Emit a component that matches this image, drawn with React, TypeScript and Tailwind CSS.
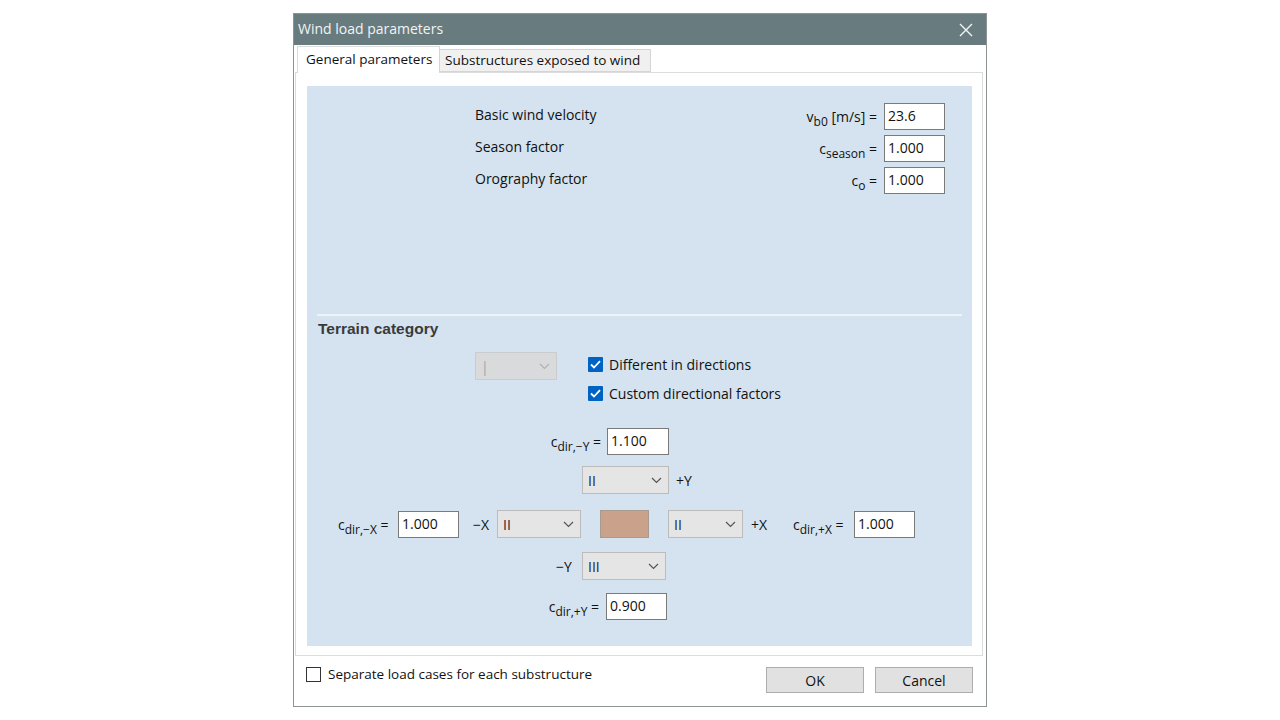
import React from "react";

const font = { fontFamily: '"Open Sans", "Noto Sans", sans-serif' };

function Sub({ base, sub }: { base: string; sub: string }) {
  return (
    <span className="whitespace-nowrap">
      {base}
      <span className="relative top-[4px] text-[12px]">{sub}</span>
    </span>
  );
}

function Field({ value, w = "w-[62px]" }: { value: string; w?: string }) {
  return (
    <div className={`${w} h-[27px] shrink-0 border border-[#7a7a7a] bg-white pl-[3px] text-[14px] leading-[23px] text-[#111]`}>
      {value}
    </div>
  );
}

function Chevron({ color }: { color: string }) {
  return (
    <svg width="11" height="7" viewBox="0 0 11 7" className="shrink-0">
      <path d="M1 1l4.5 4.5L10 1" fill="none" stroke={color} strokeWidth="1.2" />
    </svg>
  );
}

function Select({ value, w, disabled }: { value: string; w: string; disabled?: boolean }) {
  return (
    <div
      className={`${w} h-[28px] shrink-0 flex items-center justify-between pl-[5px] pr-[6px] border text-[14px] ${
        disabled
          ? "bg-[#d8dadc] border-[#cacccd] text-[#a3a5a7]"
          : "bg-[#e5e5e5] border-[#bcbcbc] text-[#2a2238]"
      }`}
    >
      <span>{value}</span>
      <Chevron color={disabled ? "#b0b2b4" : "#555"} />
    </div>
  );
}

function Check({ checked }: { checked: boolean }) {
  return checked ? (
    <div className="w-[15px] h-[15px] shrink-0 bg-[#0063c4] flex items-center justify-center rounded-[1px]">
      <svg width="11" height="9" viewBox="0 0 11 9">
        <path d="M1 4.5l3 3L10 1.2" fill="none" stroke="#fff" strokeWidth="1.8" />
      </svg>
    </div>
  ) : (
    <div className="w-[15px] h-[15px] shrink-0 bg-white border border-[#333]" />
  );
}

function TopRow({ label, sym, value }: { label: string; sym: React.ReactNode; value: string }) {
  return (
    <div className="flex items-center h-[27px] pl-[168px] pr-[27px]">
      <span className="relative -top-[2px]">{label}</span>
      <span className="ml-auto mr-[7px] whitespace-nowrap">{sym}</span>
      <Field value={value} w="w-[61px]" />
    </div>
  );
}

export default function App() {
  return (
    <div className="w-[1280px] h-[720px] bg-white pt-[13px] pl-[293px]" style={font}>
      <div className="w-[694px] h-[694px] border border-[#8e9496] bg-white flex flex-col text-[14px] text-[#111]">
        {/* Title bar */}
        <div className="h-[31px] shrink-0 bg-[#687b7e] flex items-center justify-between pl-[4px] pr-[13px]">
          <span className="relative -top-[1px] text-[14px] text-[#f2f4f4]">Wind load parameters</span>
          <svg width="14" height="14" viewBox="0 0 14 14">
            <path d="M1 1l12 12M13 1L1 13" stroke="#f4f6f6" strokeWidth="1.4" />
          </svg>
        </div>

        {/* Tabs */}
        <div className="h-[27px] shrink-0 flex items-end pl-[3px] relative z-10">
          <div className="h-[27px] w-[143px] bg-white border-t border-l border-r border-[#dcdcdc] pl-[8px] pt-[2px] -mb-px text-[13.5px]">
            General parameters
          </div>
          <div className="h-[23px] w-[212px] -ml-px bg-[#f0f0f0] border border-[#d5d5d5] pl-[5px] leading-[21px] text-[13.5px]">
            Substructures exposed to wind
          </div>
        </div>

        {/* Tab panel */}
        <div className="ml-[1px] mr-[3px] h-[584px] shrink-0 border border-[#dcdcdc] pl-[11px] pt-[13px] pr-[10px] pb-[9px]">
          <div className="h-[560px] bg-[#d4e3ef] flex flex-col">
            <div className="pt-[17px] flex flex-col gap-[5px]">
              <TopRow label="Basic wind velocity" sym={<><Sub base="v" sub="b0" /> [m/s] =</>} value="23.6" />
              <TopRow label="Season factor" sym={<><Sub base="c" sub="season" /> =</>} value="1.000" />
              <TopRow label="Orography factor" sym={<><Sub base="c" sub="o" /> =</>} value="1.000" />
            </div>

            <div className="mt-[120px] mx-[10px] h-[2px] bg-[#eef4f9]" />

            <div
              className="mt-[4px] pl-[11px] text-[15.5px] font-bold text-[#3a3a3a] h-[18px] leading-[18px]"
              style={{ fontFamily: '"Liberation Sans", Arial, sans-serif' }}
            >
              Terrain category
            </div>

            <div className="mt-[14px] flex pl-[168px]">
              <Select value="|" w="w-[82px]" disabled />
              <div className="ml-[31px] flex flex-col gap-[10px] pt-[3px]">
                <div className="flex items-center gap-[6px] h-[19px]">
                  <Check checked />
                  <span>Different in directions</span>
                </div>
                <div className="flex items-center gap-[6px] h-[19px]">
                  <Check checked />
                  <span>Custom directional factors</span>
                </div>
              </div>
            </div>

            {/* Row A */}
            <div className="mt-[25px] flex items-center">
              <span className="w-[294px] text-right"><Sub base="c" sub="dir,−Y" /> =</span>
              <div className="ml-[6px]"><Field value="1.100" /></div>
            </div>

            {/* Row B */}
            <div className="mt-[11px] flex items-center pl-[275px]">
              <Select value="II" w="w-[87px]" />
              <span className="ml-[7px]">+Y</span>
            </div>

            {/* Row C */}
            <div className="mt-[16px] flex items-center pl-[31px]">
              <span className="w-[54px] whitespace-nowrap"><Sub base="c" sub="dir,−X" /> =</span>
              <div className="ml-[6px]"><Field value="1.000" w="w-[61px]" /></div>
              <span className="ml-[14px] w-[18px]">−X</span>
              <div className="ml-[6px]"><Select value="II" w="w-[84px]" /></div>
              <div className="ml-[19px] w-[49px] h-[28px] shrink-0 bg-[#caa18b] border border-[#a99a90]" />
              <div className="ml-[19px]"><Select value="II" w="w-[75px]" /></div>
              <span className="ml-[8px] w-[20px]">+X</span>
              <span className="ml-[22px] w-[55px] whitespace-nowrap"><Sub base="c" sub="dir,+X" /> =</span>
              <div className="ml-[6px]"><Field value="1.000" w="w-[61px]" /></div>
            </div>

            {/* Row D */}
            <div className="mt-[14px] flex items-center pl-[249px]">
              <span className="w-[20px]">−Y</span>
              <div className="ml-[6px]"><Select value="III" w="w-[84px]" /></div>
            </div>

            {/* Row E */}
            <div className="mt-[13px] flex items-center">
              <span className="w-[292px] text-right"><Sub base="c" sub="dir,+Y" /> =</span>
              <div className="ml-[7px]"><Field value="0.900" w="w-[61px]" /></div>
            </div>
          </div>
        </div>

        {/* Footer */}
        <div className="flex-1 flex items-start justify-between pl-[12px] pr-[13px] pt-[11px]">
          <div className="flex items-center gap-[7px] h-[15px]">
            <Check checked={false} />
            <span className="text-[13.5px]">Separate load cases for each substructure</span>
          </div>
          <div className="flex gap-[11px]">
            <button className="w-[98px] h-[26px] bg-[#e1e1e1] border border-[#adadad] text-[14px]">OK</button>
            <button className="w-[98px] h-[26px] bg-[#e1e1e1] border border-[#adadad] text-[14px]">Cancel</button>
          </div>
        </div>
      </div>
    </div>
  );
}
